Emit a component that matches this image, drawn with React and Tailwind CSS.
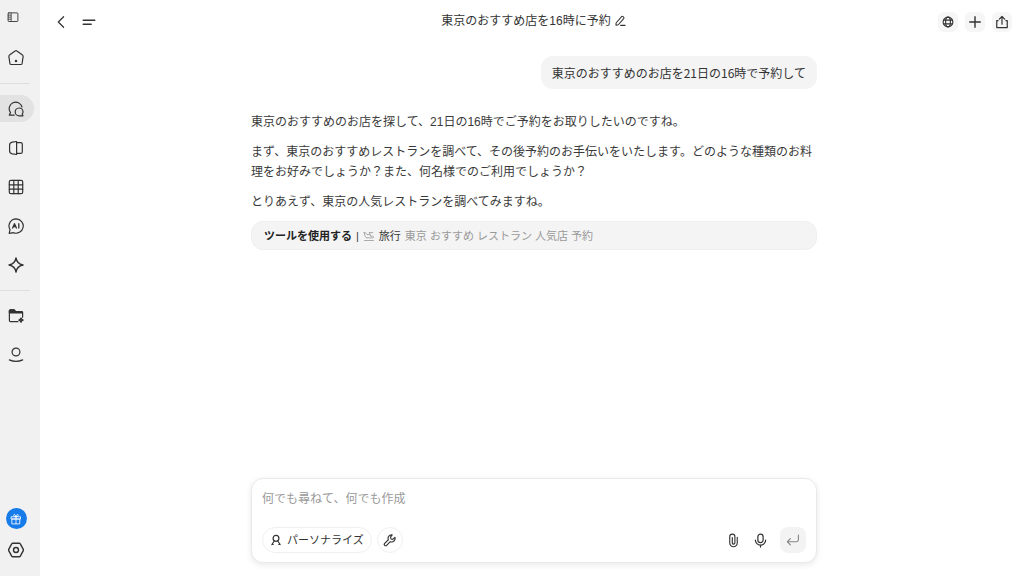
const FONT = "font-['Liberation_Sans','Noto_Sans_CJK_JP',sans-serif]";

function Icon({ children, className = "size-4", viewBox = "0 0 16 16", strokeWidth = 1.2 }) {
  return (
    <svg
      className={className}
      viewBox={viewBox}
      fill="none"
      stroke="currentColor"
      strokeWidth={strokeWidth}
      strokeLinecap="round"
      strokeLinejoin="round"
      aria-hidden="true"
    >
      {children}
    </svg>
  );
}

const MAIN_ITEMS = [
  {
    label: "チャット",
    active: true,
    icon: (
      <>
        <path d="M6.200 14.200H1.300l1.200-2.700A6.500 6.500 0 1 1 14 6" />
        <path d="M15 14.800h-3.900a3.900 3.900 0 1 1 3.900-4.100c0 .9-.2 1.700-.8 2.500z" />
      </>
    )
  },
  {
    label: "ノート",
    icon: (
      <>
        <path d="M8.600 1.500 4.300 2.100C2.500 2.400 1.600 3.300 1.600 5v6c0 1.700.9 2.600 2.700 2.900l4.300.6z" />
        <path d="M8.600 2.600h4.200c1 0 1.500.5 1.500 1.500v7.800c0 1-.5 1.500-1.500 1.500H8.600" />
      </>
    )
  },
  {
    label: "テーブル",
    icon: (
      <>
        <rect x="1.300" y="1.300" width="13.400" height="13.400" rx="1.500" />
        <path d="M5.800 1.300v13.400M10.200 1.300v13.400M1.300 5.800h13.400M1.300 10.200h13.400" />
      </>
    )
  },
  {
    label: "AI",
    icon: (
      <>
        <path d="M8.200.8A7.200 7.200 0 1 1 5.400 14.700L1.200 15.300l.8-3.700A7.200 7.200 0 0 1 8.200.8z" />
        <path d="M4.600 10 6.500 5.700 8.400 10M5.300 8.700h2.400M10.800 5.700V10" strokeWidth="1.300" />
      </>
    )
  },
  {
    label: "スパーク",
    icon: (
      <path
        d="M8 .9c.6 4.100 2.100 6.200 7 7.100-4.900.9-6.400 3-7 7.100C7.400 11 5.900 8.900 1 8c4.900-.9 6.400-3 7-7.100z"
        strokeWidth="1.400"
      />
    )
  }
];

const LIBRARY_ITEMS = [
  {
    label: "フォルダ",
    icon: (
      <>
        <path d="M10 13.700H2.600c-.8 0-1.200-.5-1.200-1.200V3c0-.7.4-1.100 1.100-1.100h3.600l1.300 1.600h6c.8 0 1.200.4 1.200 1.200v4.500" />
        <path d="M1.400 5V3c0-.7.4-1.100 1.100-1.100h3.600l1.300 1.600h6c.8 0 1.200.4 1.200 1.200V5z" fill="currentColor" />
        <path d="M13 9.900c.3 1.400.7 1.800 2.200 2.200-1.500.3-1.900.7-2.200 2.200-.3-1.500-.7-1.900-2.200-2.200 1.500-.4 1.900-.8 2.200-2.200z" fill="currentColor" />
      </>
    )
  },
  {
    label: "アカウント",
    icon: (
      <>
        <circle cx="8" cy="5" r="3.900" />
        <path d="M1.300 12.900c4.100 1.900 9.300 1.900 13.400 0" />
      </>
    )
  }
];

function NavButton({ label, active, children }) {
  return (
    <button
      type="button"
      aria-label={label}
      className={`flex h-[27px] w-full items-center justify-center ${active ? "rounded-r-full rounded-l-xl bg-[#e2e2e2]" : ""}`}
    >
      {children}
    </button>
  );
}

function Sidebar() {
  return (
    <nav className="flex w-10 shrink-0 flex-col bg-[#f1f1f1] pt-[3px] pr-1.5 pb-[13px] text-[#333]">
      <div className="pr-2">
        <NavButton label="サイドバーを開く">
          <Icon className="size-3">
            <rect x="1.500" y="2.500" width="13" height="11.500" rx="1" />
            <path d="M5.500 2.500V14M1.500 5.500h4M1.500 8.200h4M1.500 11h4" strokeWidth="1" />
          </Icon>
        </NavButton>
      </div>
      <div className="mt-3.5 pr-0.5">
        <NavButton label="ホーム">
          <Icon>
            <path d="M7.100 1.100 1.500 5.100c-.5.4-.7.9-.6 1.500l1 6.900c.1.600.5 1 1.200 1h9.800c.7 0 1.100-.4 1.200-1l1-6.900c.1-.6-.1-1.100-.6-1.500L8.900 1.100c-.5-.4-1.300-.4-1.800 0z" />
            <circle cx="8" cy="11" r=".6" fill="currentColor" />
          </Icon>
        </NavButton>
      </div>
      <div className="mt-3 mr-1 h-px bg-[#dedede]" />
      <ul className="mt-[11px] flex flex-col gap-3">
        {MAIN_ITEMS.map((item) => (
          <li key={item.label}>
            <NavButton label={item.label} active={item.active}>
              <Icon className="mr-0.5 size-4">{item.icon}</Icon>
            </NavButton>
          </li>
        ))}
      </ul>
      <div className="mt-3 mr-1 h-px bg-[#dedede]" />
      <ul className="mt-[11px] flex flex-col gap-3">
        {LIBRARY_ITEMS.map((item) => (
          <li key={item.label}>
            <NavButton label={item.label}>
              <Icon className="mr-0.5 size-4">{item.icon}</Icon>
            </NavButton>
          </li>
        ))}
      </ul>
      <div className="mt-auto flex flex-col items-center gap-[7px] pr-0.5">
        <button
          type="button"
          aria-label="ギフト"
          className="flex size-[21px] items-center justify-center rounded-full bg-[#187bea] text-white"
        >
          <Icon className="size-3" strokeWidth={1.1}>
            <path d="M2 5h12v3H2zM3 8h10v6.500H3zM8 5v9.500M8 5C6 5 4.600 4.200 4.900 2.800 5.300 1.200 7.700 2 8 5c.3-3 2.700-3.800 3.100-2.200C11.400 4.200 10 5 8 5z" />
          </Icon>
        </button>
        <NavButton label="設定">
          <Icon strokeWidth={1.400}>
            <path d="M4.800 1.200h6.400c.5 0 .9.2 1.100.6l3 5.500c.2.500.2.900 0 1.400l-3 5.500c-.2.400-.6.600-1.100.6H4.800c-.5 0-.9-.2-1.100-.6L.7 8.700c-.2-.5-.2-.9 0-1.400l3-5.500c.2-.4.6-.6 1.100-.6z" />
            <circle cx="8" cy="8" r="2.500" />
          </Icon>
        </NavButton>
      </div>
    </nav>
  );
}

function Header() {
  return (
    <header className="grid h-11 shrink-0 grid-cols-[1fr_auto_1fr] items-center px-3 text-[#333]">
      <div className="flex items-center gap-[11px] pl-0.5">
        <button type="button" aria-label="戻る" className="flex size-4 items-center justify-center">
          <Icon className="size-[14px]" strokeWidth={1.400}>
            <path d="M9.800 2 3.800 8l6 6" />
          </Icon>
        </button>
        <button type="button" aria-label="メニュー" className="flex size-4 items-center justify-center">
          <Icon strokeWidth={1.400}>
            <path d="M2.200 6.200h11.600M2.200 10.300h8" />
          </Icon>
        </button>
      </div>
      <div className="flex items-center gap-0.5 pb-0.5 pl-1">
        <h1 className="text-xs leading-5 text-[#333]">東京のおすすめ店を16時に予約</h1>
        <button type="button" aria-label="タイトルを編集">
          <Icon className="size-3.5" strokeWidth={1.2}>
            <path d="M3.500 10.300 9.600 3.200c.5-.6 1.300-.7 1.900-.2l.6.500c.6.500.6 1.200.1 1.800L6.100 12.300l-2.700.5zM8.800 13h5" />
          </Icon>
        </button>
      </div>
      <div className="flex items-center justify-end gap-[7px]">
        <button type="button" aria-label="言語" className="flex size-5 items-center justify-center rounded-md bg-[#f6f6f6]">
          <Icon className="size-3" strokeWidth={1.500}>
            <circle cx="8" cy="8" r="6.500" />
            <ellipse cx="8" cy="8" rx="3.200" ry="6.500" />
            <path d="M2.200 5.500h11.600M2.200 10.500h11.600" />
          </Icon>
        </button>
        <button type="button" aria-label="新規" className="flex size-5 items-center justify-center rounded-md bg-[#f6f6f6]">
          <Icon className="size-3.5" strokeWidth={1.600}>
            <path d="M8 2v12M2 8h12" />
          </Icon>
        </button>
        <button type="button" aria-label="共有" className="flex size-5 items-center justify-center rounded-md bg-[#f6f6f6]">
          <Icon className="size-3.5" strokeWidth={1.400}>
            <path d="M8 10.500V1.800M4.900 4.700 8 1.700l3.100 3M3.500 6.500H2v7.800h12V6.500h-1.500" />
          </Icon>
        </button>
      </div>
    </header>
  );
}

function Conversation() {
  return (
    <section className="flex flex-col pt-3">
      <p className="self-end rounded-xl bg-[#f4f4f4] px-[11px] py-1.5 font-['Noto_Sans_CJK_JP',sans-serif] text-xs leading-[21px] text-[#333]">
        東京のおすすめのお店を21日の16時で予約して
      </p>
      <div className="mt-[23px] flex flex-col gap-2.5 text-xs leading-5 text-[#3a3a3a]">
        <p>東京のおすすめのお店を探して、21日の16時でご予約をお取りしたいのですね。</p>
        <p>
          まず、東京のおすすめレストランを調べて、その後予約のお手伝いをいたします。どのような種類のお料理をお好みでしょうか？また、何名様でのご利用でしょうか？
        </p>
        <p>とりあえず、東京の人気レストランを調べてみますね。</p>
      </div>
      <div className="mt-[9px] flex h-[29px] items-center rounded-xl border border-[#efefef] bg-[#f4f4f4] px-3 text-[11px] leading-4 text-[#3a3a3a]">
        <strong className="font-bold text-[#222]">ツールを使用する</strong>
        <span className="px-1">|</span>
        <Icon className="mr-1 size-3 text-[#999]" strokeWidth={1.100}>
          <path d="M2 14h12M5 10.300l8 .3c1.400 0 1.400-2.100 0-2.300l-2.800-.3M1.500 3.500l1.300 4.600c.3 1.300.9 2 2.200 2.200M1.500 3.500h1.800l2 2.500 3.200.2M8.500 3.500h4.500M8.500 3.500 10.200 8" />
        </Icon>
        <span className="mr-1">旅行</span>
        <span className="text-[#999]">東京 おすすめ レストラン 人気店 予約</span>
      </div>
    </section>
  );
}

function Composer() {
  return (
    <form className="mt-auto mb-[13px] flex flex-col rounded-xl border border-[#e9e9e9] bg-white px-2.5 pt-2.5 pb-[9px] text-[#333] shadow-[0_2px_6px_rgba(0,0,0,0.09)]">
      <textarea
        rows={1}
        aria-label="メッセージ"
        placeholder="何でも尋ねて、何でも作成"
        className="block h-[38px] w-full resize-none text-xs leading-5 outline-none placeholder:text-[#999]"
      />
      <div className="flex items-center">
        <button
          type="button"
          className="flex h-[26px] items-center gap-[5px] rounded-full border border-[#f0f0f0] px-[7px] text-[11px] leading-4"
        >
          <Icon className="size-3" strokeWidth={1.600}>
            <circle cx="8" cy="5.800" r="3.900" />
            <path d="M5.700 9.300 2.500 14M10.300 9.300l3.200 4.700M2.500 14h1.800M11.700 14h1.800" />
          </Icon>
          パーソナライズ
        </button>
        <button
          type="button"
          aria-label="ツール"
          className="ml-[5px] flex size-[26px] items-center justify-center rounded-full border border-[#f0f0f0]"
        >
          <Icon className="size-3.5" strokeWidth={1.300}>
            <path d="M10.500 2.200a4 4 0 0 0-4.400 5.500l-4.200 4.100a1.600 1.600 0 0 0 2.300 2.300l4.100-4.200a4 4 0 0 0 5.300-5l-2.500 2.400-2-.5-.5-2z" />
          </Icon>
        </button>
        <div className="ml-auto flex items-center gap-3">
          <button type="button" aria-label="ファイルを添付">
            <Icon className="size-[15px]" strokeWidth={1.200}>
              <path d="M12 4.500v6.200a4 4 0 0 1-8 0V4a2.700 2.700 0 0 1 5.500 0v6.500a1.400 1.400 0 0 1-2.800 0V4.800" />
            </Icon>
          </button>
          <button type="button" aria-label="音声入力">
            <Icon className="size-[15px]" strokeWidth={1.300}>
              <rect x="5.200" y="1.200" width="5.600" height="9" rx="2.800" />
              <path d="M2.500 7.500a5.500 5.500 0 0 0 11 0M8 13v2" />
            </Icon>
          </button>
          <button
            type="submit"
            aria-label="送信"
            className="flex size-[26px] items-center justify-center rounded-lg bg-[#f3f3f3] text-[#888]"
          >
            <Icon className="size-3.5" strokeWidth={1.300}>
              <path d="M14.200 2.500v5.300c0 1.500-.7 2.200-2.200 2.200H1.800M5 6.500 1.600 10 5 13.500" />
            </Icon>
          </button>
        </div>
      </div>
    </form>
  );
}

export default function App() {
  return (
    <div className={`flex min-h-screen bg-white ${FONT}`} lang="ja">
      <Sidebar />
      <main className="flex min-w-0 flex-1 flex-col">
        <Header />
        <div className="flex flex-1 flex-col pl-1">
          <div className="mx-auto flex w-full max-w-[566px] flex-1 flex-col">
            <Conversation />
            <Composer />
          </div>
        </div>
      </main>
    </div>
  );
}
